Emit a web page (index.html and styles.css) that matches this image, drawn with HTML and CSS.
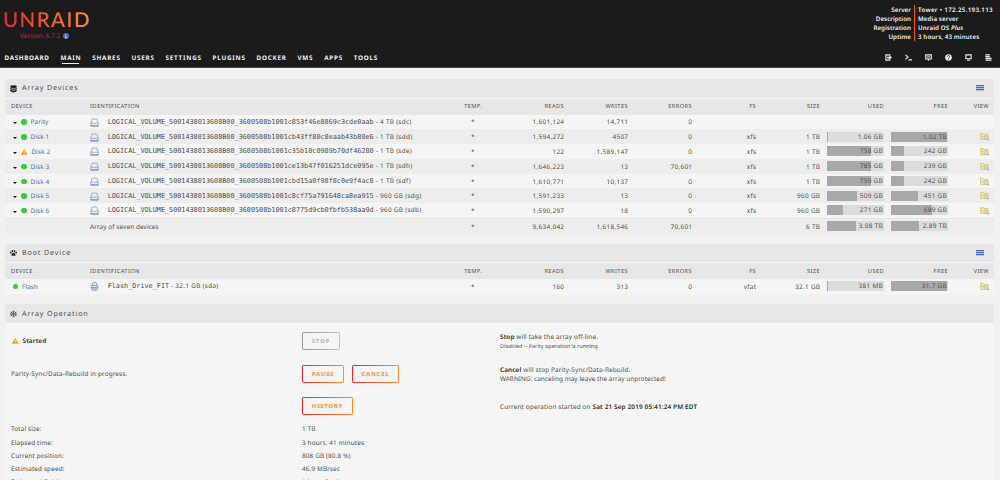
FILE: index.html
```html
<!DOCTYPE html>
<html lang="en">
<head>
    <meta charset="UTF-8">
    <meta name="viewport" content="width=device-width, initial-scale=1.0">
    <title>Tower/Main</title>
    <link rel="stylesheet" href="styles.css">
</head>
<body>
    <!-- icon definitions -->
    <svg class="defs" width="0" height="0">
        <symbol id="i-disk" viewBox="0 0 18 18">
            <path d="M4.5 2h9l3 8.5v5h-15v-5zM1.5 10.5h15" fill="none" stroke="#7b98d6" stroke-width="1.5"/>
            <path d="M1 16h16" stroke="#6485cc" stroke-width="2"/>
        </symbol>
        <symbol id="i-flash" viewBox="0 0 18 18">
            <path d="M4.5 7V3.5q0-2 2-2h5q2 0 2 2V7M2.5 7h13v4h-13zM3.5 11v3q0 2.500 2.500 2.500h6q2.500 0 2.500-2.500v-3" fill="none" stroke="#6485cc" stroke-width="1.600"/>
            <path d="M5 13.500h8" stroke="#6485cc" stroke-width="1.500"/>
        </symbol>
        <symbol id="i-warn" viewBox="0 0 18 16">
            <path d="M9 .8 17.200 15.200H.8z" fill="#ff9900" stroke="#ff9900" stroke-width="1.500" stroke-linejoin="round"/>
            <path d="M9 5.500v5M9 12v2" stroke="#fff" stroke-width="2"/>
        </symbol>
        <symbol id="i-view" viewBox="0 0 18 18">
            <path d="M1 3h5.500l1.500 2h8v10H1z" fill="#fbe39b" stroke="#e9bd58" stroke-width="1.500"/>
            <path d="M3 9h7" stroke="#f0c460" stroke-width="1.500"/>
            <circle cx="12" cy="11" r="4" fill="#bcdcf5" stroke="#9bbbd8"/>
            <path d="m14.800 14 2.700 3" stroke="#b97a50" stroke-width="2"/>
        </symbol>
        <symbol id="i-list" viewBox="0 0 8 6">
            <path d="M0 .5h8M0 2.500h8M0 4.500h8" stroke="#4468b8"/>
            <path d="M0 1.500h8M0 3.500h8M0 5.500h8" stroke="#b4c1e0"/>
        </symbol>
        <symbol id="i-db" viewBox="0 0 18 20">
            <ellipse cx="9" cy="4" rx="8.500" ry="3.600"/>
            <path d="M.5 6.500q8.500 5 17 0v3.200q-8.500 5-17 0zM.5 11.400q8.500 5 17 0v4q-8.500 7-17 0z"/>
        </symbol>
        <symbol id="i-paw" viewBox="0 0 20 20">
            <ellipse cx="7" cy="4.500" rx="2.300" ry="3.400"/>
            <ellipse cx="13" cy="4.500" rx="2.300" ry="3.400"/>
            <ellipse cx="2.500" cy="9" rx="2.200" ry="3"/>
            <ellipse cx="17.500" cy="9" rx="2.200" ry="3"/>
            <path d="M10 9c3 0 6 4.500 6 7 0 3.500-4 1.700-6 1.700S4 19.500 4 16c0-2.500 3-7 6-7z"/>
        </symbol>
        <symbol id="i-flake" viewBox="0 0 20 20">
            <path d="M10 0v20M1.300 5l17.400 10M18.700 5 1.300 15M7 2l3 3 3-3M7 18l3-3 3 3M1 9l4-1-1-4M19 11l-4 1 1 4M1 11l4 1-1 4M19 9l-4-1 1-4" fill="none" stroke="#333" stroke-width="1.700"/>
        </symbol>
    </svg>

    <header class="header">
        <div class="banner">
            <div class="logo">
                <div class="logo-name">UNRAID</div>
                <div class="version">Version: 6.7.2
                    <svg class="info" viewBox="0 0 12 12"><circle cx="6" cy="6" r="6" fill="#486dba"/><path d="M6 2v2M4.500 5.500H6V10M4.300 9.500h3.400" fill="none" stroke="#dce5f7" stroke-width="1.500"/></svg>
                </div>
            </div>
            <div class="server">
                <div class="server-labels">Server<br>Description<br>Registration<br>Uptime</div>
                <div class="server-values"><span class="address">Tower • 172.25.193.113</span><br>Media server<br>Unraid OS <em>Plus</em><br>3 hours, 43 minutes</div>
            </div>
        </div>
        <div class="menu">
            <nav class="nav">
                <a>DASHBOARD</a>
                <a class="active">MAIN</a>
                <a>SHARES</a>
                <a>USERS</a>
                <a>SETTINGS</a>
                <a>PLUGINS</a>
                <a>DOCKER</a>
                <a>VMS</a>
                <a>APPS</a>
                <a>TOOLS</a>
            </nav>
            <div class="tools">
                <svg viewBox="0 0 16 16"><path d="M11 4V2H2v12h9v-2" fill="none" stroke="#eee" stroke-width="2.500"/><path d="M5 6h5V3l6 5-6 5v-3H5z" fill="#eee"/></svg>
                <svg viewBox="0 0 16 16"><path d="m1 2 6 5-6 5M8 13.500h8" fill="none" stroke="#eee" stroke-width="2.500"/></svg>
                <svg viewBox="0 0 16 16"><path d="M1.500 2h13v9.500h-5L8 14l-1.500-2.500h-5z" fill="none" stroke="#eee" stroke-width="2.400"/><path d="M4 5.500h8M4 8.500h8" stroke="#eee" stroke-width="1.500"/></svg>
                <svg viewBox="0 0 16 16"><circle cx="8" cy="8" r="7.500" fill="#eee"/><path d="M5.500 6q0-2.500 2.500-2.500T10.500 6Q10.500 7 8 9v1M8 11v2" fill="none" stroke="#1c1b1b" stroke-width="1.800"/></svg>
                <svg viewBox="0 0 16 16"><path d="M2 2h12v9H2z" fill="none" stroke="#eee" stroke-width="2.500"/><path d="M4.500 14h7" stroke="#eee" stroke-width="2.500"/></svg>
                <svg viewBox="0 0 16 16"><path d="M1 2h10M1 6h10M1 10h14M1 14h14" stroke="#eee" stroke-width="2.600"/></svg>
            </div>
        </div>
    </header>

    <main>
        <section class="panel">
            <div class="title"><svg class="title-icon"><use href="#i-db"/></svg><span>Array Devices</span><svg class="toggle"><use href="#i-list"/></svg></div>
            <table class="disks">
                <thead>
                    <tr><th class="device">DEVICE</th><th class="ident">IDENTIFICATION</th><th class="temp">TEMP.</th><th>READS</th><th>WRITES</th><th>ERRORS</th><th>FS</th><th>SIZE</th><th>USED</th><th>FREE</th><th class="view">VIEW</th></tr>
                </thead>
                <tbody>
                    <tr>
                        <td class="device"><i class="caret"></i><i class="orb"></i><a>Parity</a></td>
                        <td class="ident"><svg><use href="#i-disk"/></svg><code>LOGICAL_VOLUME_5001438013608B00_3600508b1001c853f46e8869c3cde0aab</code> - 4 TB (sdc)</td>
                        <td class="temp">*</td><td>1,601,124</td><td>14,711</td><td>0</td><td></td><td></td><td></td><td></td><td></td>
                    </tr>
                    <tr>
                        <td class="device"><i class="caret"></i><i class="orb"></i><a>Disk 1</a></td>
                        <td class="ident"><svg><use href="#i-disk"/></svg><code>LOGICAL_VOLUME_5001438013608B00_3600508b1001cb43ff80c8eaab43b80e6</code> - 1 TB (sdd)</td>
                        <td class="temp">*</td><td>1,594,272</td><td>4507</td><td>0</td><td>xfs</td><td>1 TB</td>
                        <td class="usage"><div class="bar"><span style="width: 1%"></span><b>1.06 GB</b></div></td>
                        <td class="usage"><div class="bar"><span style="width: 99%"></span><b>1.02 TB</b></div></td>
                        <td class="view"><svg><use href="#i-view"/></svg></td>
                    </tr>
                    <tr>
                        <td class="device"><i class="caret"></i><svg class="warn"><use href="#i-warn"/></svg><a>Disk 2</a></td>
                        <td class="ident"><svg><use href="#i-disk"/></svg><code>LOGICAL_VOLUME_5001438013608B00_3600508b1001c35b10c0989b70df46280</code> - 1 TB (sde)</td>
                        <td class="temp">*</td><td>122</td><td>1,589,147</td><td>0</td><td>xfs</td><td>1 TB</td>
                        <td class="usage"><div class="bar"><span style="width: 77%"></span><b>758 GB</b></div></td>
                        <td class="usage"><div class="bar"><span style="width: 24%"></span><b>242 GB</b></div></td>
                        <td class="view"><svg><use href="#i-view"/></svg></td>
                    </tr>
                    <tr>
                        <td class="device"><i class="caret"></i><i class="orb"></i><a>Disk 3</a></td>
                        <td class="ident"><svg><use href="#i-disk"/></svg><code>LOGICAL_VOLUME_5001438013608B00_3600508b1001ce13b47f016251dce095e</code> - 1 TB (sdh)</td>
                        <td class="temp">*</td><td>1,646,223</td><td>13</td><td>70,601</td><td>xfs</td><td>1 TB</td>
                        <td class="usage"><div class="bar"><span style="width: 77%"></span><b>785 GB</b></div></td>
                        <td class="usage"><div class="bar"><span style="width: 23%"></span><b>239 GB</b></div></td>
                        <td class="view"><svg><use href="#i-view"/></svg></td>
                    </tr>
                    <tr>
                        <td class="device"><i class="caret"></i><i class="orb"></i><a>Disk 4</a></td>
                        <td class="ident"><svg><use href="#i-disk"/></svg><code>LOGICAL_VOLUME_5001438013608B00_3600508b1001cbd15a0f98f8c0e9f4ac0</code> - 1 TB (sdf)</td>
                        <td class="temp">*</td><td>1,610,771</td><td>10,137</td><td>0</td><td>xfs</td><td>1 TB</td>
                        <td class="usage"><div class="bar"><span style="width: 77%"></span><b>759 GB</b></div></td>
                        <td class="usage"><div class="bar"><span style="width: 24%"></span><b>242 GB</b></div></td>
                        <td class="view"><svg><use href="#i-view"/></svg></td>
                    </tr>
                    <tr>
                        <td class="device"><i class="caret"></i><i class="orb"></i><a>Disk 5</a></td>
                        <td class="ident"><svg><use href="#i-disk"/></svg><code>LOGICAL_VOLUME_5001438013608B00_3600508b1001c8cf75a791648ca8ea915</code> - 960 GB (sdg)</td>
                        <td class="temp">*</td><td>1,591,233</td><td>13</td><td>0</td><td>xfs</td><td>960 GB</td>
                        <td class="usage"><div class="bar"><span style="width: 53%"></span><b>509 GB</b></div></td>
                        <td class="usage"><div class="bar"><span style="width: 47%"></span><b>451 GB</b></div></td>
                        <td class="view"><svg><use href="#i-view"/></svg></td>
                    </tr>
                    <tr>
                        <td class="device"><i class="caret"></i><i class="orb"></i><a>Disk 6</a></td>
                        <td class="ident"><svg><use href="#i-disk"/></svg><code>LOGICAL_VOLUME_5001438013608B00_3600508b1001c8775d9cb0fbfb538aa9d</code> - 960 GB (sdb)</td>
                        <td class="temp">*</td><td>1,590,297</td><td>18</td><td>0</td><td>xfs</td><td>960 GB</td>
                        <td class="usage"><div class="bar"><span style="width: 28%"></span><b>271 GB</b></div></td>
                        <td class="usage"><div class="bar"><span style="width: 72%"></span><b>689 GB</b></div></td>
                        <td class="view"><svg><use href="#i-view"/></svg></td>
                    </tr>
                    <tr class="total">
                        <td></td>
                        <td class="ident">Array of seven devices</td>
                        <td class="temp">*</td><td>9,634,042</td><td>1,618,546</td><td>70,601</td><td></td><td>6 TB</td>
                        <td class="usage"><div class="bar"><span style="width: 52%"></span><b>3.08 TB</b></div></td>
                        <td class="usage"><div class="bar"><span style="width: 49%"></span><b>2.89 TB</b></div></td>
                        <td></td>
                    </tr>
                </tbody>
            </table>
        </section>

        <section class="panel">
            <div class="title"><svg class="title-icon"><use href="#i-paw"/></svg><span>Boot Device</span><svg class="toggle"><use href="#i-list"/></svg></div>
            <table class="disks">
                <thead>
                    <tr><th class="device">DEVICE</th><th class="ident">IDENTIFICATION</th><th class="temp">TEMP.</th><th>READS</th><th>WRITES</th><th>ERRORS</th><th>FS</th><th>SIZE</th><th>USED</th><th>FREE</th><th class="view">VIEW</th></tr>
                </thead>
                <tbody>
                    <tr>
                        <td class="device flash"><i class="orb"></i><a>Flash</a></td>
                        <td class="ident"><svg><use href="#i-flash"/></svg><code>Flash_Drive_FIT</code> - 32.1 GB (sda)</td>
                        <td class="temp">*</td><td>160</td><td>313</td><td>0</td><td>vfat</td><td>32.1 GB</td>
                        <td class="usage"><div class="bar"><span style="width: 2%"></span><b>381 MB</b></div></td>
                        <td class="usage"><div class="bar"><span style="width: 99%"></span><b>31.7 GB</b></div></td>
                        <td class="view"><svg><use href="#i-view"/></svg></td>
                    </tr>
                </tbody>
            </table>
        </section>

        <section class="panel operation">
            <div class="title"><svg class="title-icon"><use href="#i-flake"/></svg><span>Array Operation</span></div>
            <div class="op-row first">
                <div class="op-state"><svg class="warn"><use href="#i-warn"/></svg><strong>Started</strong></div>
                <div class="op-buttons"><button disabled>STOP</button></div>
                <div class="op-text"><strong>Stop</strong> will take the array off-line.<br><small>Disabled -- Parity operation is running</small></div>
            </div>
            <div class="op-row">
                <div class="op-state">Parity-Sync/Data-Rebuild in progress.</div>
                <div class="op-buttons"><button>PAUSE</button><button>CANCEL</button></div>
                <div class="op-text"><strong>Cancel</strong> will stop Parity-Sync/Data-Rebuild.<br><span class="warning">WARNING: canceling may leave the array unprotected!</span></div>
            </div>
            <div class="op-row">
                <div class="op-state"></div>
                <div class="op-buttons"><button>HISTORY</button></div>
                <div class="op-text single">Current operation started on <strong>Sat 21 Sep 2019 05:41:24 PM EDT</strong></div>
            </div>
            <dl class="status">
                <dt>Total size:</dt><dd>1 TB</dd>
                <dt>Elapsed time:</dt><dd>3 hours, 41 minutes</dd>
                <dt>Current position:</dt><dd>808 GB (80.8 %)</dd>
                <dt>Estimated speed:</dt><dd>46.9 MB/sec</dd>
                <dt>Estimated finish:</dt><dd>1 hour, 8 minutes</dd>
            </dl>
        </section>
    </main>
</body>
</html>
```
FILE: styles.css
```css
* {
    margin: 0;
    padding: 0;
    box-sizing: border-box;
}

body {
    height: 480px;
    overflow: hidden;
    background-color: #f1f1f1;
    color: #4d4d4d;
    font-family: "Noto Sans", sans-serif;
    font-size: 6.4px;
    line-height: 9px;
    text-rendering: geometricPrecision;
}

.defs {
    position: absolute;
}

.header {
    height: 68px;
    background-color: #1c1b1b;
    border-bottom: 1px solid #4a4848;
    color: #f2f2f2;
}

.banner {
    display: flex;
    justify-content: space-between;
    height: 46px;
    padding: 5px 4px 0 3px;
}

.logo {
    width: 88px;
}

.logo-name {
    margin-top: 4px;
    height: 22px;
    line-height: 23px;
    font-family: Lato, sans-serif;
    font-size: 20.5px;
    font-weight: 600;
    letter-spacing: 1.4px;
    color: transparent;
    background: linear-gradient(90deg, #e22828, #ff8c2f);
    -webkit-background-clip: text;
    background-clip: text;
}

.version {
    display: flex;
    align-items: center;
    gap: 3px;
    padding-left: 17px;
    color: #c02c30;
}

.info {
    width: 6px;
    height: 6px;
}

.server {
    display: flex;
    height: 36px;
    font-size: 6.2px;
    font-weight: 600;
    letter-spacing: 0.05px;
}

.server-labels {
    padding-right: 3px;
    text-align: right;
}

.server-values {
    width: 82px;
    padding-left: 3px;
    border-left: 1px solid #ff4f1a;
    letter-spacing: 0.1px;
    white-space: nowrap;
}

.server-values .address {
    letter-spacing: 0.32px;
}

.menu {
    display: flex;
    justify-content: space-between;
    padding: 6px 8px 0 4.500px;
}

.nav {
    display: flex;
    gap: 10.8px;
    font-size: 6.3px;
    font-weight: 700;
    line-height: 11px;
    letter-spacing: 0.78px;
}

.nav a {
    position: relative;
}

.nav a:first-child {
    letter-spacing: 0.65px;
}

.nav .active::after {
    content: "";
    position: absolute;
    left: 2px;
    right: 2px;
    bottom: -1px;
    height: 1px;
    background-color: #f2f2f2;
}

.tools {
    display: flex;
    gap: 13px;
    padding-top: 2px;
}

.tools svg {
    width: 7px;
    height: 7px;
}

.panel {
    margin: 11px 6px 10px 5px;
}

.panel + .panel {
    margin-top: 0;
}

.title {
    display: flex;
    align-items: center;
    height: 19.500px;
    padding: 1px 10px 0 5px;
    border-bottom: 1px solid #f7f7f7;
    background-color: #e7e7e7;
    font-size: 7.1px;
    letter-spacing: 0.88px;
}

.title-icon {
    width: 7px;
    height: 8px;
    margin-right: 5px;
    fill: #222;
}

.toggle {
    width: 8px;
    height: 6px;
    margin: 0 0 1px auto;
}

.disks {
    width: 100%;
    table-layout: fixed;
    border-collapse: collapse;
}

.disks th {
    width: 64px;
    height: 16px;
    padding: 0 5px 0 0;
    background-color: #e7e7e7;
    font-size: 5.6px;
    font-weight: 400;
    letter-spacing: 0.45px;
    text-align: right;
}

.disks td {
    height: 14.800px;
    padding: 0 4.700px 0 0;
    letter-spacing: 0.3px;
    text-align: right;
    white-space: nowrap;
}

.disks tr {
    background-color: #f5f5f5;
}

.disks tbody tr:nth-child(even) {
    background-color: #ededed;
}

.disks .total td {
    height: 15.500px;
    border-top: 1px solid #e4e4e4;
}

.disks th.device {
    width: 85px;
    padding-left: 6px;
    text-align: left;
}

.disks th.ident {
    width: auto;
}

.disks .ident {
    text-align: left;
}

.disks .total .ident {
    letter-spacing: 0.1px;
}

.disks .temp {
    padding: 0;
    text-align: center;
}

.disks th.view {
    width: 41px;
}

.disks td.device {
    padding-left: 8px;
    letter-spacing: 0.1px;
    text-align: left;
}

.disks td.flash {
    padding-left: 7.500px;
}

.device a {
    color: #486dba;
}

.caret {
    display: inline-block;
    margin-right: 4px;
    border: 2.500px solid transparent;
    border-top-color: #111;
    border-bottom: 0;
}

.orb {
    display: inline-block;
    width: 5.500px;
    height: 5.500px;
    margin-right: 4px;
    border-radius: 50%;
    background-color: #33cc33;
    vertical-align: -0.500px;
}

.warn {
    width: 6.500px;
    height: 6px;
    margin-right: 4px;
}

.device .warn {
    vertical-align: -1px;
}

.ident svg {
    width: 9px;
    height: 9px;
    margin-right: 8.700px;
    vertical-align: -3px;
}

.ident code {
    font-family: "DejaVu Sans Mono", monospace;
    font-size: 6.8px;
    letter-spacing: 0;
}

.disks td.view svg {
    display: block;
    width: 9px;
    height: 9px;
    margin-left: auto;
}

.disks td.usage {
    padding: 0 5px 0 1.500px;
}

.bar {
    position: relative;
    height: 10px;
    background-color: #dcdcdc;
}

.bar span {
    display: block;
    height: 100%;
    background-color: #a8a8a8;
}

.bar b {
    position: absolute;
    top: 0;
    right: 1px;
    font-weight: 400;
    line-height: 10px;
}

.operation {
    height: 177px;
    margin-bottom: 0;
    overflow: hidden;
    background-color: #f5f5f5;
    letter-spacing: 0.13px;
}

.operation .title {
    border-bottom: 0;
}

.op-row {
    display: flex;
    height: 32.700px;
    padding-left: 6px;
}

.op-row.first {
    margin-top: 8.500px;
}

.op-state {
    display: flex;
    align-items: center;
    width: 291px;
    height: 18px;
}

.op-state .warn {
    margin-left: 1px;
}

.op-buttons {
    width: 198px;
}

.op-text small {
    font-size: 5.4px;
    letter-spacing: 0.04px;
}

.op-text .warning {
    letter-spacing: 0.05px;
}

.op-text.single {
    padding-top: 4.500px;
    letter-spacing: 0.15px;
}

strong {
    font-weight: 600;
    color: #2b2b2b;
}

button {
    height: 18px;
    margin-right: 7.500px;
    padding: 0 8.800px;
    border: 1px solid transparent;
    border-radius: 2px;
    background: linear-gradient(#f5f5f5, #f5f5f5) padding-box, linear-gradient(90deg, #e22828, #ff8c2f) border-box;
    color: #ff8c2f;
    font-family: "Noto Sans", sans-serif;
    font-size: 6px;
    font-weight: 700;
    letter-spacing: 0.75px;
}

button:disabled {
    background: linear-gradient(#f5f5f5, #f5f5f5) padding-box, linear-gradient(90deg, #999, #c0c0c0) border-box;
    color: #b8b8b8;
}

.status {
    display: grid;
    grid-template-columns: 291px 1fr;
    grid-auto-rows: 13.100px;
    margin-top: -5.500px;
    padding-left: 6px;
}
```
